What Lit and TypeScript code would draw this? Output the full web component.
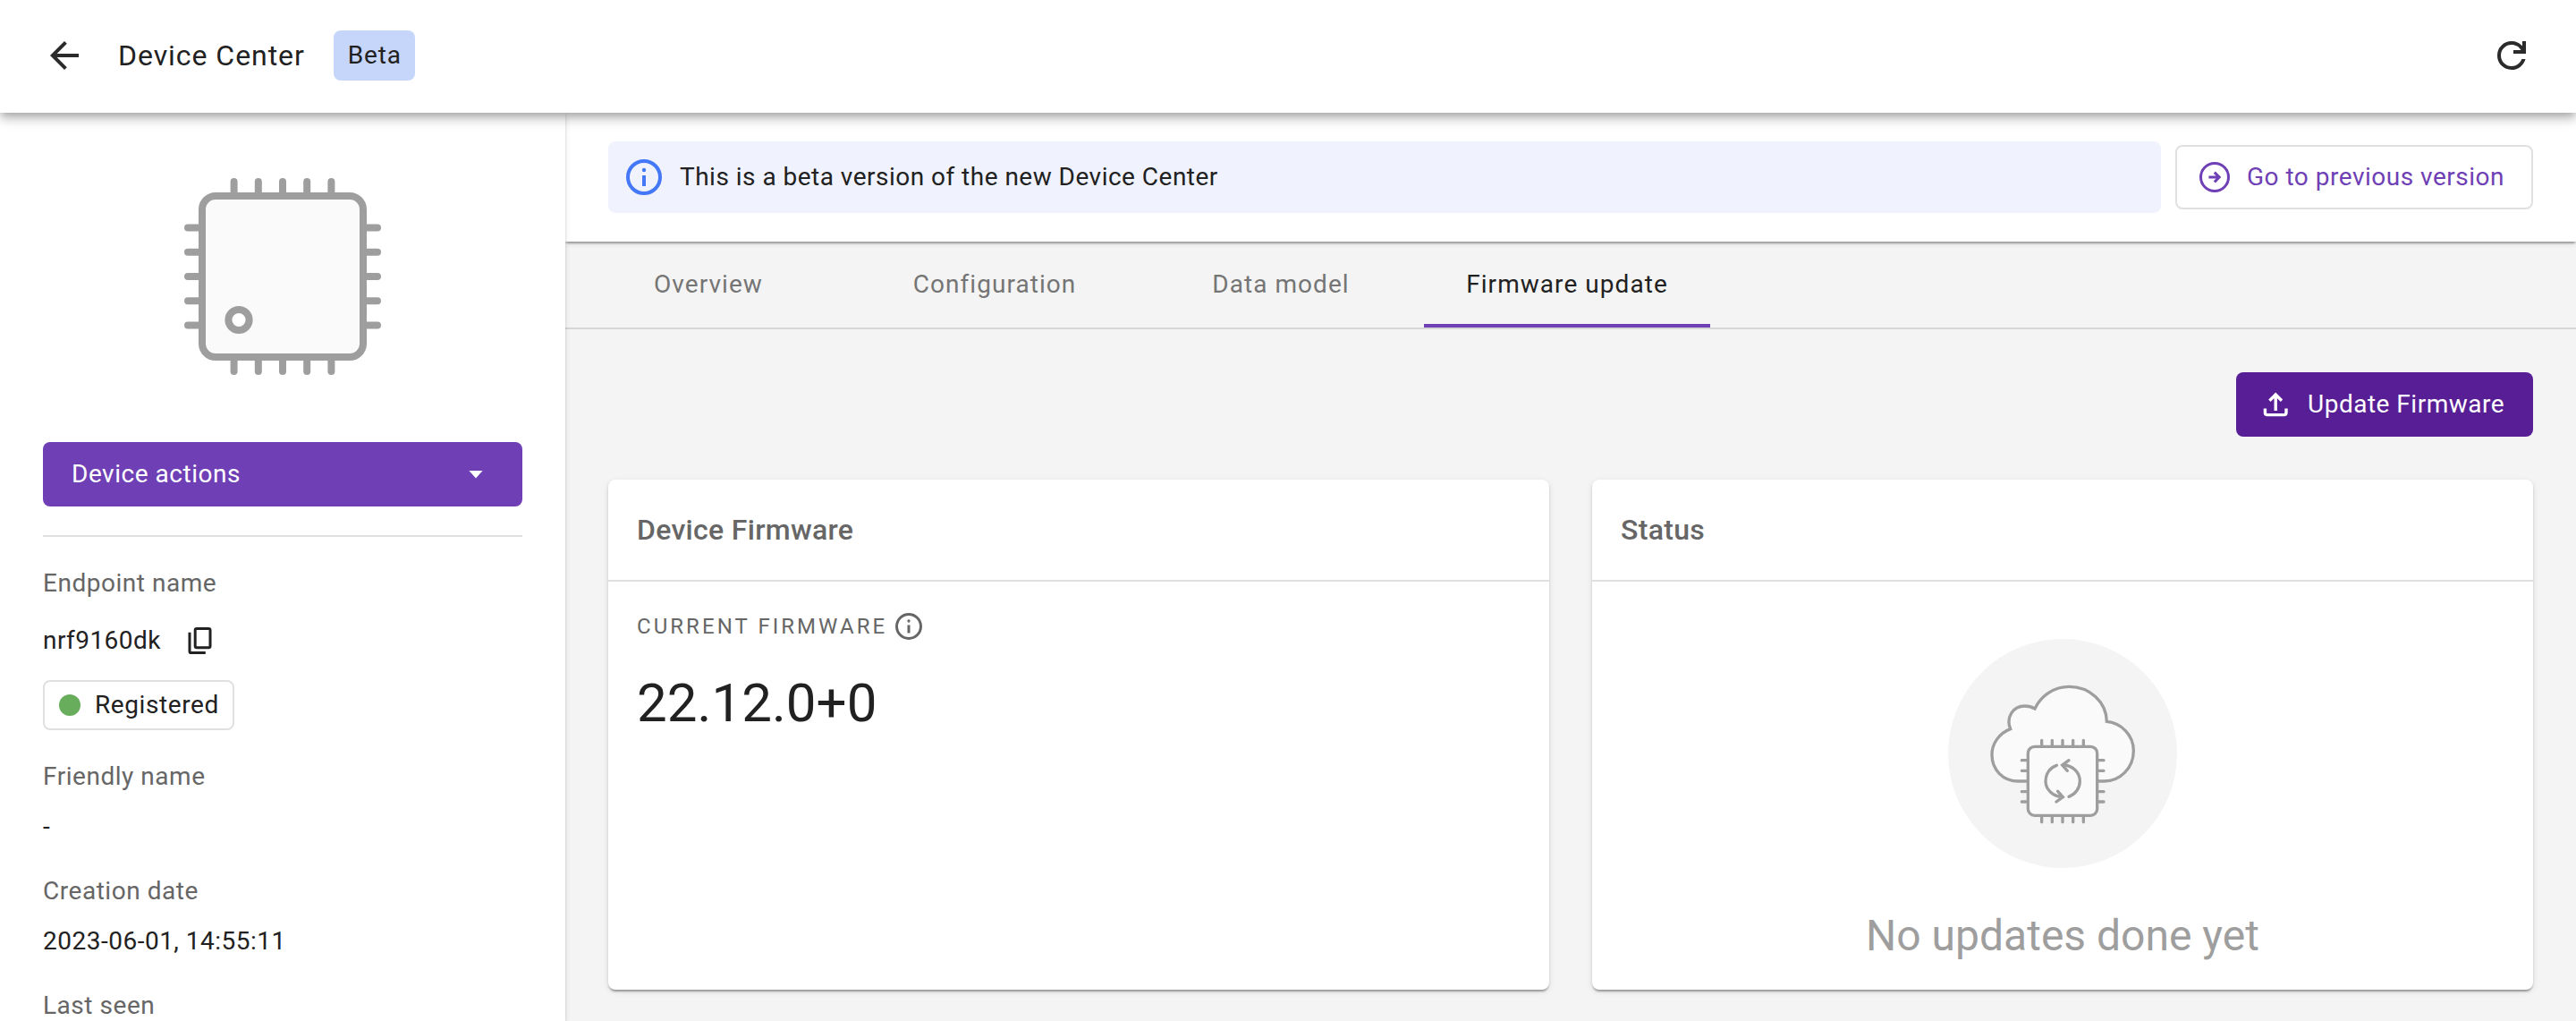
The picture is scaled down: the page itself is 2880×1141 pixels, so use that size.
import { LitElement, html, css, svg, nothing } from "lit";
import { customElement, property } from "lit/decorators.js";
import { classMap } from "lit/directives/class-map.js";

const GREY = "#9e9e9e";

const arrowBack = html`<svg width="48" height="48" viewBox="0 0 24 24">
  <path fill="#2b2b2b" d="M20 11H7.83l5.59-5.59L12 4l-8 8 8 8 1.41-1.41L7.83 13H20v-2z" />
</svg>`;

const refresh = html`<svg width="48" height="48" viewBox="0 0 24 24">
  <path
    fill="#2b2b2b"
    d="M12 20c-2.23 0-4.13-.77-5.68-2.32S4 14.23 4 12s.77-4.13 2.32-5.68S9.77 4 12 4c1.15 0 2.25.24 3.3.71 1.05.48 1.95 1.15 2.7 2.04V4h2v7h-7V9h4.2c-.53-.93-1.26-1.67-2.19-2.2S13.1 6 12 6c-1.67 0-3.08.58-4.25 1.75S6 10.33 6 12s.58 3.08 1.75 4.25S10.33 18 12 18c1.28 0 2.44-.37 3.47-1.1s1.76-1.7 2.18-2.9h2.1c-.47 1.77-1.42 3.21-2.85 4.33S13.83 20 12 20z"
  />
</svg>`;

const copyIcon = html`<svg width="28" height="32" viewBox="0 0 28 32" fill="none" stroke="#212121" stroke-width="3">
  <rect x="8.2" y="2.4" width="16.8" height="21.4" rx="1.8" />
  <path d="M2 6.800V28q0 1.600 1.600 1.600h16.200" />
</svg>`;

const infoIcon = (size: number, color: string, stroke: number) => html`<svg
  width=${size}
  height=${size}
  viewBox="0 0 40 40"
  fill="none"
>
  <circle cx="20" cy="20" r=${20 - stroke / 2} stroke=${color} stroke-width=${stroke} />
  <circle cx="20" cy="12" r="2.200" fill=${color} />
  <path d="M20 18v12" stroke=${color} stroke-width=${stroke} />
</svg>`;

const circleArrow = html`<svg width="36" height="36" viewBox="0 0 36 36" fill="none" stroke="#6f3fb5" stroke-width="3">
  <circle cx="18" cy="18" r="15.5" />
  <path d="M11.400 18H22.600M17.800 12.600L23.200 18l-5.400 5.400" />
</svg>`;

const upload = html`<svg width="28" height="28" viewBox="0 0 28 28" fill="none" stroke="#fff" stroke-width="3.400">
  <path d="M2.400 18.600V23q0 2.600 2.600 2.600h18.400q2.600 0 2.600-2.600V18.600M14.200 21V3.500M7.400 9.800l6.800-6.800 6.800 6.800" />
</svg>`;

const range = (start: number, step: number) => [0, 1, 2, 3, 4].map((i) => start + i * step);

const chip = html`<svg class="chip" width="220" height="220" viewBox="0 0 220 220">
  <g stroke=${GREY} stroke-width="8" stroke-linecap="round">
    ${range(55.6, 27.2).map(
      (p) => svg`<path d="M${p} 4v14M${p} 202v14M4 ${p}h14M202 ${p}h14" />`,
    )}
  </g>
  <rect x="20" y="20" width="180" height="180" rx="15" fill="#fafafa" stroke=${GREY} stroke-width="8" />
  <circle cx="61" cy="158.500" r="11.600" fill="#fff" stroke=${GREY} stroke-width="8" />
</svg>`;

const cloud = html`<svg class="cloud" width="256" height="256" viewBox="384 71 768 768" fill="none">
  <circle cx="768" cy="455" r="384" fill="#f4f4f4" />
  <g stroke=${GREY} stroke-width="10">
    <path
      fill="#fafafa"
      d="M660 548H620C566 548 531 508 531 459C531 420 557 387 593 373C577 333 602 296 641 296C654 296 665 299 675 305C697 260 740 231 790 231C860 231 915 283 916 348C964 352 1006 393 1006 446C1006 503 962 548 907 548H880"
    />
    <rect x="652" y="432" width="232" height="231" rx="22" fill="#fafafa" />
    <g stroke-linecap="round">
      ${range(698, 35).map((x) => svg`<path d="M${x} 411v20M${x} 665v20" />`)}
      ${[478, 513, 583, 617].map((y) => svg`<path d="M631 ${y}h20M886 ${y}h20" />`)}
      <path d="M748 495C726 502 711 523 711 548C711 577 736 599 768 601M752 582L769 601L747 617" />
      <path d="M789 600C811 592 826 571 826 548C826 518 801 494 769 494M789 478L767 494L784 513" />
    </g>
  </g>
</svg>`;

@customElement("detail-item")
class DetailItem extends LitElement {
  @property() label = "";
  @property() value = "";
  static styles = css`
    :host { display: flex; flex-direction: column; gap: 16px; line-height: 40px; }
    .label { color: #666; }
    .value { color: #212121; min-height: 40px; letter-spacing: 0.5px; }
  `;
  render() {
    return html`<div class="label">${this.label}</div>
      <div class="value">${this.value || nothing}</div>`;
  }
}

@customElement("info-card")
class InfoCard extends LitElement {
  @property() heading = "";
  static styles = css`
    :host {
      display: flex; flex-direction: column; background: #fff; border-radius: 8px;
      box-shadow: 0 4px 2px -2px rgba(0, 0, 0, 0.2), 0 2px 2px rgba(0, 0, 0, 0.14), 0 2px 6px rgba(0, 0, 0, 0.12);
    }
    .heading {
      box-sizing: border-box; height: 114px; padding: 0 32px; line-height: 112px;
      border-bottom: 2px solid #e0e0e0; font-size: 32px; font-weight: 500;
      letter-spacing: 0.3px; color: #666;
    }
  `;
  render() {
    return html`<div class="heading">${this.heading}</div>
      <slot></slot>`;
  }
}

@customElement("app-root")
class AppRoot extends LitElement {
  static styles = css`
    :host {
      display: flex; flex-direction: column; height: 1141px; overflow: hidden;
      font: 400 28px/40px Roboto, "Liberation Sans", sans-serif;
      letter-spacing: 0.53px; color: #212121; background: #fff;
    }
    svg { display: block; flex: none; }
    .topbar {
      box-sizing: border-box; flex: none; height: 126px; padding: 0 48px 2px;
      display: flex; align-items: center; background: #fff; position: relative; z-index: 3;
      box-shadow: 0 4px 8px -2px rgba(0, 0, 0, 0.2), 0 8px 10px rgba(0, 0, 0, 0.14), 0 2px 20px rgba(0, 0, 0, 0.12);
    }
    .title { margin: 0 32px 0 36px; font-size: 32px; font-weight: 400; letter-spacing: 0.95px; }
    .badge { height: 56px; padding: 0 15px 0 16px; line-height: 56px; border-radius: 8px; background: #c6d6fa; letter-spacing: 0.8px; }
    .spacer { flex: 1; }
    .page { flex: 1; display: flex; min-height: 0; }
    .sidebar {
      box-sizing: border-box; flex: none; width: 632px; padding: 73px 48px 0; background: #fff;
      display: flex; flex-direction: column; position: relative; z-index: 2;
      box-shadow: 0 4px 2px -2px rgba(0, 0, 0, 0.2), 0 2px 2px rgba(0, 0, 0, 0.14), 0 2px 6px rgba(0, 0, 0, 0.12);
    }
    .chip { align-self: center; }
    .actions {
      flex: none; margin-top: 75px; height: 72px; padding: 0 44px 0 32px; border-radius: 8px;
      background: #6f3fb5; color: #fff; display: flex; align-items: center; justify-content: space-between;
    }
    .caret { width: 16px; height: 9px; background: #fff; clip-path: polygon(0 0, 100% 0, 50% 100%); }
    .rule { flex: none; height: 2px; margin: 32px 0; background: #e0e0e0; }
    .label { color: #666; }
    .endpoint { display: flex; align-items: center; gap: 30px; margin: 24px 0; letter-spacing: 0.45px; }
    .state {
      box-sizing: border-box; align-self: flex-start; flex: none; height: 56px; padding: 0 15px 0 16px; margin-bottom: 32px;
      border: 2px solid #e0e0e0; border-radius: 8px; display: flex; align-items: center; gap: 16px; letter-spacing: 0.6px;
    }
    .dot { width: 24px; height: 24px; border-radius: 50%; background: #68ad5c; }
    .details { display: flex; flex-direction: column; gap: 32px; }
    .main { flex: 1; min-width: 0; display: flex; flex-direction: column; background: #f4f4f4; }
    .notice {
      box-sizing: border-box; flex: none; height: 144px; padding: 0 48px; background: #fff;
      display: flex; align-items: center; gap: 16px; position: relative; z-index: 1;
      box-shadow: 0 4px 2px -2px rgba(0, 0, 0, 0.2), 0 2px 2px rgba(0, 0, 0, 0.14), 0 2px 6px rgba(0, 0, 0, 0.12);
    }
    .banner {
      box-sizing: border-box; flex: 1; height: 80px; padding: 0 20px; border-radius: 8px;
      background: #f0f3fe; display: flex; align-items: center; gap: 20px; letter-spacing: 0.48px;
    }
    .previous {
      box-sizing: border-box; width: 400px; height: 72px; padding: 0 24px; border: 2px solid #e0e0e0;
      border-radius: 8px; color: #6f3fb5; display: flex; align-items: center; gap: 18px; letter-spacing: 0.5px;
    }
    .tabs { flex: none; display: flex; height: 96px; border-bottom: 2px solid #d6d6d6; }
    .tab {
      box-sizing: border-box; width: 320px; height: 96px; line-height: 95px; text-align: center;
      color: #757575; letter-spacing: 1.05px;
    }
    .tab.active { color: #212121; border-bottom: 4px solid #6f3fb5; }
    .content { padding: 48px; display: flex; flex-direction: column; gap: 48px; }
    .update {
      box-sizing: border-box; align-self: flex-end; width: 332px; height: 72px; padding: 0 30px; border-radius: 8px;
      background: #571e96; color: #fff; display: flex; align-items: center; gap: 22px; letter-spacing: 0.5px;
    }
    .cards { display: grid; grid-template-columns: 1fr 1fr; gap: 48px; height: 570px; }
    .firmware { padding: 29px 32px; }
    .caption { display: flex; align-items: center; gap: 9px; height: 42px; font-size: 24px; letter-spacing: 3.05px; color: #666; }
    .version { margin-top: 30px; line-height: 70px; font-size: 60px; letter-spacing: 0.05px; }
    .empty { flex: 1; display: flex; flex-direction: column; align-items: center; padding-top: 64px; }
    .empty-text { margin-top: 46px; line-height: 60px; font-size: 48px; letter-spacing: 0; color: #9e9e9e; }
  `;

  render() {
    const tabs = ["Overview", "Configuration", "Data model", "Firmware update"];
    return html`
      <header class="topbar">
        ${arrowBack}
        <h1 class="title">Device Center</h1>
        <span class="badge">Beta</span>
        <span class="spacer"></span>
        ${refresh}
      </header>
      <div class="page">
        <aside class="sidebar">
          ${chip}
          <div class="actions"><span>Device actions</span><span class="caret"></span></div>
          <div class="rule"></div>
          <div class="label">Endpoint name</div>
          <div class="endpoint"><span>nrf9160dk</span>${copyIcon}</div>
          <div class="state"><span class="dot"></span>Registered</div>
          <div class="details">
            <detail-item label="Friendly name" value="-"></detail-item>
            <detail-item label="Creation date" value="2023-06-01, 14:55:11"></detail-item>
            <detail-item label="Last seen"></detail-item>
          </div>
        </aside>
        <main class="main">
          <div class="notice">
            <div class="banner">
              ${infoIcon(40, "#4478f6", 4)}
              <span>This is a beta version of the new Device Center</span>
            </div>
            <div class="previous">${circleArrow}<span>Go to previous version</span></div>
          </div>
          <nav class="tabs">
            ${tabs.map((t, i) => html`<div class=${classMap({ tab: true, active: i === 3 })}>${t}</div>`)}
          </nav>
          <div class="content">
            <div class="update">${upload}<span>Update Firmware</span></div>
            <div class="cards">
              <info-card heading="Device Firmware">
                <div class="firmware">
                  <div class="caption"><span>CURRENT FIRMWARE</span>${infoIcon(30, "#666", 4)}</div>
                  <div class="version">22.12.0+0</div>
                </div>
              </info-card>
              <info-card heading="Status">
                <div class="empty">${cloud}<div class="empty-text">No updates done yet</div></div>
              </info-card>
            </div>
          </div>
        </main>
      </div>
    `;
  }
}
